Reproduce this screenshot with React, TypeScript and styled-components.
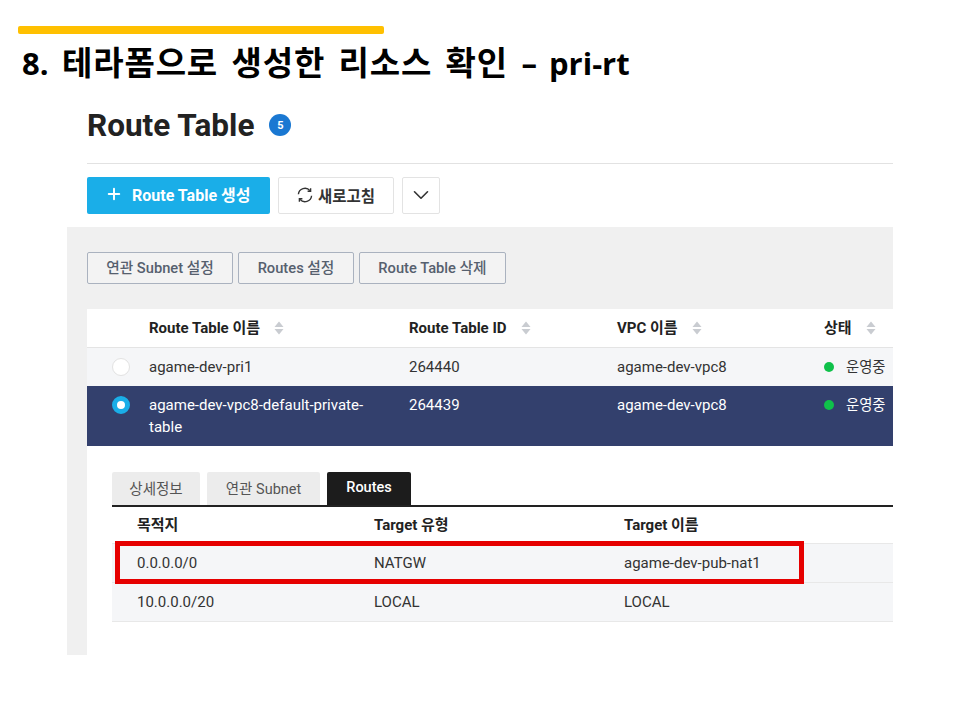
// App.tsx
import React from 'react'
import styled, { createGlobalStyle } from 'styled-components'
import { ChevronDown, Plus } from 'lucide-react'

const GlobalStyle = createGlobalStyle`
  html, body {
    margin: 0;
    padding: 0;
    background: #fff;
  }
  body {
    font-family: Roboto, "Noto Sans CJK KR", sans-serif;
    color: #333;
  }
`

const Slide = styled.div`
  width: 960px;
  height: 720px;
  overflow: hidden;
  padding-top: 26px;
  box-sizing: border-box;
`

const Accent = styled.div`
  width: 366px;
  height: 8px;
  margin-left: 18px;
  border-radius: 2px;
  background: #ffc000;
`

const SlideTitle = styled.h1`
  margin: 5px 0 0 22px;
  height: 47px;
  font: 700 33px/48px "Open Sans", "Noto Sans CJK KR", sans-serif;
  letter-spacing: 0.85px;
  word-spacing: 4px;
  color: #000;
  white-space: nowrap;
  span {
    font-size: 31px;
    letter-spacing: 0;
  }
`

const Shot = styled.div`
  width: 826px;
  margin-left: 67px;
`

const Head = styled.div`
  margin-left: 20px;
`

const PageTitle = styled.div`
  display: flex;
  align-items: flex-start;
  gap: 15px;
  box-sizing: border-box;
  height: 65px;
  margin-top: 13px;
  border-bottom: 1px solid #e2e2e2;
  h2 {
    margin: 0;
    font: 700 31.5px/53px Roboto, sans-serif;
    color: #222;
  }
`

const CountBadge = styled.span`
  display: flex;
  align-items: center;
  justify-content: center;
  width: 22px;
  height: 22px;
  margin-top: 15px;
  border-radius: 50%;
  background: #1a78d2;
  color: #fff;
  font-size: 11px;
  font-weight: 700;
`

const Toolbar = styled.div`
  display: flex;
  gap: 8px;
  padding: 13px 0;
`

const PrimaryButton = styled.button`
  display: flex;
  align-items: center;
  gap: 9px;
  width: 183px;
  height: 37px;
  padding: 0 0 3px 18px;
  border: 0;
  border-radius: 2px;
  background: #1aaee8;
  color: #fff;
  font: 700 16px Roboto, "Noto Sans CJK KR", sans-serif;
`

const GhostButton = styled.button<{ $w: number }>`
  display: flex;
  align-items: center;
  justify-content: center;
  gap: 5px;
  width: ${(p) => p.$w}px;
  height: 37px;
  padding: 0 0 2px;
  border: 1px solid #e3e3e3;
  border-radius: 2px;
  background: #fff;
  color: #333;
  font: 700 15.5px Roboto, "Noto Sans CJK KR", sans-serif;
`

const Panel = styled.div`
  height: 428px;
  padding: 25px 0 0 20px;
  box-sizing: border-box;
  background: #f0f0f0;
`

const ActionRow = styled.div`
  display: flex;
  gap: 5px;
  margin-bottom: 25px;
`

const ActionButton = styled.button<{ $w: number }>`
  width: ${(p) => p.$w}px;
  height: 32px;
  padding: 0 0 3px;
  border: 1px solid #aab2bf;
  border-radius: 2px;
  background: #f3f3f3;
  color: #56606e;
  font: 500 14.7px Roboto, "Noto Sans CJK KR", sans-serif;
`

const Sheet = styled.div`
  height: 346px;
  background: #fff;
`

const TableRow = styled.div<{ $kind: 'head' | 'plain' | 'selected' }>`
  display: grid;
  grid-template-columns: 62px 260px 208px 207px 1fr;
  box-sizing: border-box;
  height: ${(p) => (p.$kind === 'selected' ? 60 : p.$kind === 'head' ? 39 : 38)}px;
  padding-top: ${(p) => (p.$kind === 'selected' ? 8 : 0)}px;
  padding-bottom: ${(p) => (p.$kind === 'plain' ? 1 : 0)}px;
  align-items: ${(p) => (p.$kind === 'selected' ? 'start' : 'center')};
  font-size: 15px;
  line-height: 22px;
  font-weight: ${(p) => (p.$kind === 'head' ? 700 : 400)};
  background: ${(p) => (p.$kind === 'head' ? '#fff' : p.$kind === 'selected' ? '#33406d' : '#f5f6f8')};
  color: ${(p) => (p.$kind === 'selected' ? '#fff' : '#333')};
  border-bottom: ${(p) => (p.$kind === 'head' ? '1px solid #e4e4e4' : '0')};
`

const NameCell = styled.div`
  max-width: 225px;
`

const HeadLabel = styled.div`
  display: flex;
  align-items: center;
  gap: 14px;
  margin-top: -1px;
  color: #222;
`

const RadioCell = styled.div`
  display: flex;
  justify-content: center;
  padding-left: 6px;
`

const Radio = styled.span<{ $on?: boolean }>`
  display: block;
  width: 18px;
  height: 18px;
  margin-top: ${(p) => (p.$on ? 2 : 0)}px;
  box-sizing: border-box;
  border-radius: 50%;
  background: #fff;
  border: ${(p) => (p.$on ? '5px solid #1aaee8' : '1px solid #e2e2e2')};
`

const StatusCell = styled.div`
  display: flex;
  align-items: center;
  gap: 12px;
  font-size: 14.3px;
`

const StatusDot = styled.span`
  width: 10px;
  height: 10px;
  border-radius: 50%;
  background: #0fc14a;
`

const Detail = styled.div`
  position: relative;
  margin: 26px 0 0 25px;
`

const Tabs = styled.div`
  display: flex;
  gap: 7px;
  height: 33px;
`

const Tab = styled.div<{ $w: number; $active?: boolean }>`
  display: flex;
  align-items: center;
  justify-content: center;
  width: ${(p) => p.$w}px;
  padding-bottom: 3px;
  box-sizing: border-box;
  border-radius: 2px 2px 0 0;
  background: ${(p) => (p.$active ? '#1c1c1c' : '#ececec')};
  color: ${(p) => (p.$active ? '#fff' : '#555')};
  font-size: 14.5px;
  font-weight: ${(p) => (p.$active ? 500 : 400)};
`

const RouteRow = styled.div`
  display: grid;
  grid-template-columns: 237px 250px 1fr;
  align-items: center;
  box-sizing: border-box;
  height: 39px;
  padding-left: 25px;
  font-size: 15px;
  color: #333;
  background: #f5f6f8;
  border-bottom: 1px solid #e8e8e8;
  &:last-of-type {
    border-bottom: 0;
    border-radius: 0 0 0 3px;
  }
`

const RouteHead = styled.div`
  display: grid;
  grid-template-columns: 237px 250px 1fr;
  align-items: center;
  box-sizing: border-box;
  height: 39px;
  padding: 0 0 3px 25px;
  font-size: 15px;
  font-weight: 700;
  color: #222;
  border-top: 2px solid #222;
  border-bottom: 1px solid #e8e8e8;
`

const Highlight = styled.div`
  position: absolute;
  left: 3px;
  top: 69px;
  width: 689px;
  height: 43px;
  box-sizing: border-box;
  border: 5px solid #e60000;
`

const SortIcon = () => (
  <svg width="10" height="14" viewBox="0 0 10 14" fill="#c9ccd1">
    <path d="M5 0.5 9.5 6H0.5Z" />
    <path d="M5 13.5 9.5 8H0.5Z" />
  </svg>
)

const RefreshIcon = () => (
  <svg width="16" height="16" viewBox="0 0 16 16" fill="none" stroke="#333" strokeWidth="1.4">
    <path d="M1.4 7.2A6.6 6.6 0 0 1 13 3.6" />
    <path d="M14.6 8.8A6.6 6.6 0 0 1 3 12.4" />
    <path d="M13.6 1.2v3h-3" />
    <path d="M2.4 14.8v-3h3" />
  </svg>
)

const rows = [
  { name: 'agame-dev-pri1', id: '264440', vpc: 'agame-dev-vpc8', selected: false },
  { name: 'agame-dev-vpc8-default-private-table', id: '264439', vpc: 'agame-dev-vpc8', selected: true },
]

const routes = [
  { dest: '0.0.0.0/0', type: 'NATGW', target: 'agame-dev-pub-nat1' },
  { dest: '10.0.0.0/20', type: 'LOCAL', target: 'LOCAL' },
]

export default function App() {
  return (
    <Slide>
      <GlobalStyle />
      <Accent />
      <SlideTitle>
        <span>8.</span> 테라폼으로 생성한 리소스 확인 <span>– pri-rt</span>
      </SlideTitle>
      <Shot>
        <Head>
          <PageTitle>
            <h2>Route Table</h2>
            <CountBadge>5</CountBadge>
          </PageTitle>
          <Toolbar>
            <PrimaryButton>
              <Plus size={18} strokeWidth={2.6} />
              Route Table 생성
            </PrimaryButton>
            <GhostButton $w={116}>
              <RefreshIcon />
              새로고침
            </GhostButton>
            <GhostButton $w={38}>
              <ChevronDown size={26} strokeWidth={1.5} />
            </GhostButton>
          </Toolbar>
        </Head>
        <Panel>
          <ActionRow>
            <ActionButton $w={146}>연관 Subnet 설정</ActionButton>
            <ActionButton $w={116}>Routes 설정</ActionButton>
            <ActionButton $w={147}>Route Table 삭제</ActionButton>
          </ActionRow>
          <Sheet>
            <TableRow $kind="head">
              <div />
              <HeadLabel>Route Table 이름 <SortIcon /></HeadLabel>
              <HeadLabel>Route Table ID <SortIcon /></HeadLabel>
              <HeadLabel>VPC 이름 <SortIcon /></HeadLabel>
              <HeadLabel>상태 <SortIcon /></HeadLabel>
            </TableRow>
            {rows.map((r) => (
              <TableRow key={r.id} $kind={r.selected ? 'selected' : 'plain'}>
                <RadioCell>
                  <Radio $on={r.selected} />
                </RadioCell>
                <NameCell>{r.name}</NameCell>
                <div>{r.id}</div>
                <div>{r.vpc}</div>
                <StatusCell>
                  <StatusDot />
                  운영중
                </StatusCell>
              </TableRow>
            ))}
            <Detail>
              <Tabs>
                <Tab $w={88}>상세정보</Tab>
                <Tab $w={113}>연관 Subnet</Tab>
                <Tab $w={84} $active>Routes</Tab>
              </Tabs>
              <RouteHead>
                <div>목적지</div>
                <div>Target 유형</div>
                <div>Target 이름</div>
              </RouteHead>
              {routes.map((r) => (
                <RouteRow key={r.dest}>
                  <div>{r.dest}</div>
                  <div>{r.type}</div>
                  <div>{r.target}</div>
                </RouteRow>
              ))}
              <Highlight />
            </Detail>
          </Sheet>
        </Panel>
      </Shot>
    </Slide>
  )
}
